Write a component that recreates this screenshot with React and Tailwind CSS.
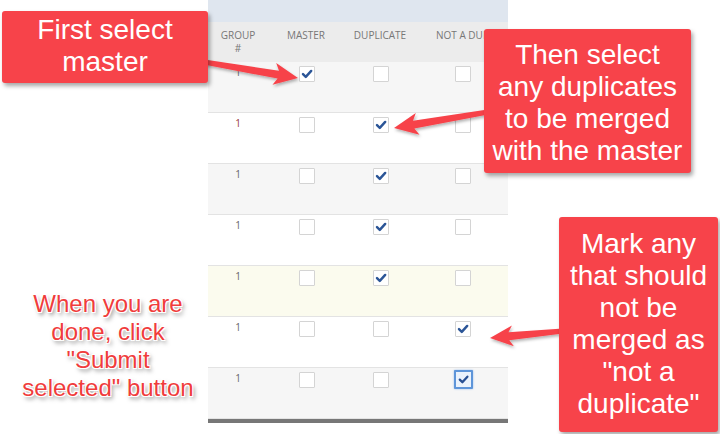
import React from "react";

const RED = "#f7434a";

function arrowPts(x1, y1, x2, y2, w0, w1, hl, hw, sweep = 4) {
  const dx = x2 - x1, dy = y2 - y1;
  const L = Math.hypot(dx, dy);
  const ux = dx / L, uy = dy / L;
  const nx = -uy, ny = ux;
  const bx = x2 - ux * hl, by = y2 - uy * hl;
  const sx = bx - ux * sweep, sy = by - uy * sweep;
  const p = [
    [x1 + nx * w0 / 2, y1 + ny * w0 / 2],
    [bx + nx * w1 / 2, by + ny * w1 / 2],
    [sx + nx * hw / 2, sy + ny * hw / 2],
    [x2, y2],
    [sx - nx * hw / 2, sy - ny * hw / 2],
    [bx - nx * w1 / 2, by - ny * w1 / 2],
    [x1 - nx * w0 / 2, y1 - ny * w0 / 2],
  ];
  return p.map((q) => q[0].toFixed(1) + "," + q[1].toFixed(1)).join(" ");
}

function Check({ checked, focus }) {
  if (focus) {
    return (
      <div className="w-[19px] h-[19px] -mt-[2px] border-2 border-[#5e95d9] bg-[#eaf2fc] rounded-[1px] flex items-center justify-center shadow-[0_0_2px_#8fb6ea]">
        <svg width="13" height="13" viewBox="0 0 15 15">
          <path d="M3.2 7.6 L6.2 10.6 L12 4.2" fill="none" stroke="#274f93" strokeWidth="2.6" strokeLinecap="round" strokeLinejoin="round" />
        </svg>
      </div>
    );
  }
  return (
    <div className="w-[16px] h-[16px] border border-[#d4d4d4] bg-white rounded-[1px] flex items-center justify-center">
      {checked && (
        <svg width="14" height="14" viewBox="0 0 15 15">
          <path d="M3.2 7.6 L6.2 10.6 L12 4.2" fill="none" stroke="#2b5597" strokeWidth="2.6" strokeLinecap="round" strokeLinejoin="round" />
        </svg>
      )}
    </div>
  );
}

const rows = [
  { bg: "bg-[#f6f6f6]", m: true, d: false, n: false, num: "text-[#666]" },
  { bg: "bg-white", m: false, d: true, n: false, num: "text-[#9b3b3b]" },
  { bg: "bg-[#f6f6f6]", m: false, d: true, n: false, num: "text-[#666]" },
  { bg: "bg-white", m: false, d: true, n: false, num: "text-[#666]" },
  { bg: "bg-[#fbfbee]", m: false, d: true, n: false, num: "text-[#666]" },
  { bg: "bg-white", m: false, d: false, n: true, num: "text-[#666]" },
  { bg: "bg-[#f6f6f6]", m: false, d: false, n: true, num: "text-[#666]", focus: true },
];

export default function App() {
  const sans = { fontFamily: '"Liberation Sans", Arial, sans-serif' };
  return (
    <div className="relative w-[720px] h-[434px] overflow-hidden bg-white">
      {/* table */}
      <div className="ml-[208px] w-[300px] font-['Open_Sans',sans-serif]">
        <div className="h-[22px] bg-[#dfe6ef]" />
        <div className="h-[40px] bg-[#ececec] grid grid-cols-[60px_76px_72px_92px] text-[10px] leading-[13px] text-[#777] pt-[7px]">
          <div className="text-center">GROUP<br />#</div>
          <div className="text-center">MASTER</div>
          <div className="text-center">DUPLICATE</div>
          <div className="pl-[20px] whitespace-nowrap">NOT A DUPLICATE</div>
        </div>
        {rows.map((r, i) => (
          <div key={i} className={`h-[51px] border-b border-[#e3e3e3] grid grid-cols-[60px_76px_72px_92px] ${r.bg}`}>
            <div className={`text-center text-[10px] leading-[14px] pt-[3px] ${r.num}`}>1</div>
            <div className="flex justify-center pt-[4px] pl-[2px]"><Check checked={r.m} /></div>
            <div className="flex justify-center pt-[4px] pl-[1px]"><Check checked={r.d} /></div>
            <div className="flex justify-center pt-[4px] pl-[2px]"><Check checked={r.n} focus={r.focus} /></div>
          </div>
        ))}
        <div className="h-[4px] bg-[#777]" />
      </div>

      {/* arrows */}
      <svg className="absolute inset-0 pointer-events-none" width="720" height="434" viewBox="0 0 720 434">
        <defs>
          <filter id="ash" x="-20%" y="-50%" width="140%" height="200%">
            <feDropShadow dx="1" dy="2" stdDeviation="1.5" floodColor="#000" floodOpacity="0.3" />
          </filter>
        </defs>
        <polygon points={arrowPts(204, 62, 298, 78, 5, 8, 20, 22)} fill={RED} filter="url(#ash)" />
        <polygon points={arrowPts(488, 112, 394, 128, 5, 8, 20, 22)} fill={RED} filter="url(#ash)" />
        <polygon points={arrowPts(563, 331, 490, 338, 5, 8, 19, 21)} fill={RED} filter="url(#ash)" />
      </svg>

      {/* callouts */}
      <div
        className="absolute left-[2px] top-[11px] w-[206px] h-[72px] bg-[#f7434a] rounded-[3px] shadow-[2px_3px_4px_rgba(0,0,0,0.35)] text-white text-[28px] leading-[32px] text-center pt-[3px]"
        style={sans}
      >
        First select<br />master
      </div>
      <div
        className="absolute left-[484px] top-[29px] w-[207px] h-[144px] bg-[#f7434a] rounded-[3px] shadow-[2px_3px_4px_rgba(0,0,0,0.35)] text-white text-[28px] leading-[32px] text-center pt-[10px]"
        style={sans}
      >
        Then select<br />any duplicates<br />to be merged<br />with the master
      </div>
      <div
        className="absolute left-[559px] top-[217px] w-[159px] h-[215px] bg-[#f7434a] rounded-[3px] shadow-[2px_3px_4px_rgba(0,0,0,0.35)] text-white text-[28px] leading-[32px] text-center pt-[11px]"
        style={sans}
      >
        Mark any<br />that should<br />not be<br />merged as<br />"not a<br />duplicate"
      </div>
      <div
        className="absolute left-[8px] top-[290px] w-[200px] text-center text-[#f03c3c] text-[24px] leading-[28px] [text-shadow:0_0_1px_#fff,1px_1px_0_#fff,-1px_-1px_0_#fff,1px_-1px_0_#fff,-1px_1px_0_#fff,2px_3px_4px_rgba(0,0,0,0.5)]"
        style={sans}
      >
        When you are<br />done, click<br />"Submit<br />selected" button
      </div>
    </div>
  );
}
